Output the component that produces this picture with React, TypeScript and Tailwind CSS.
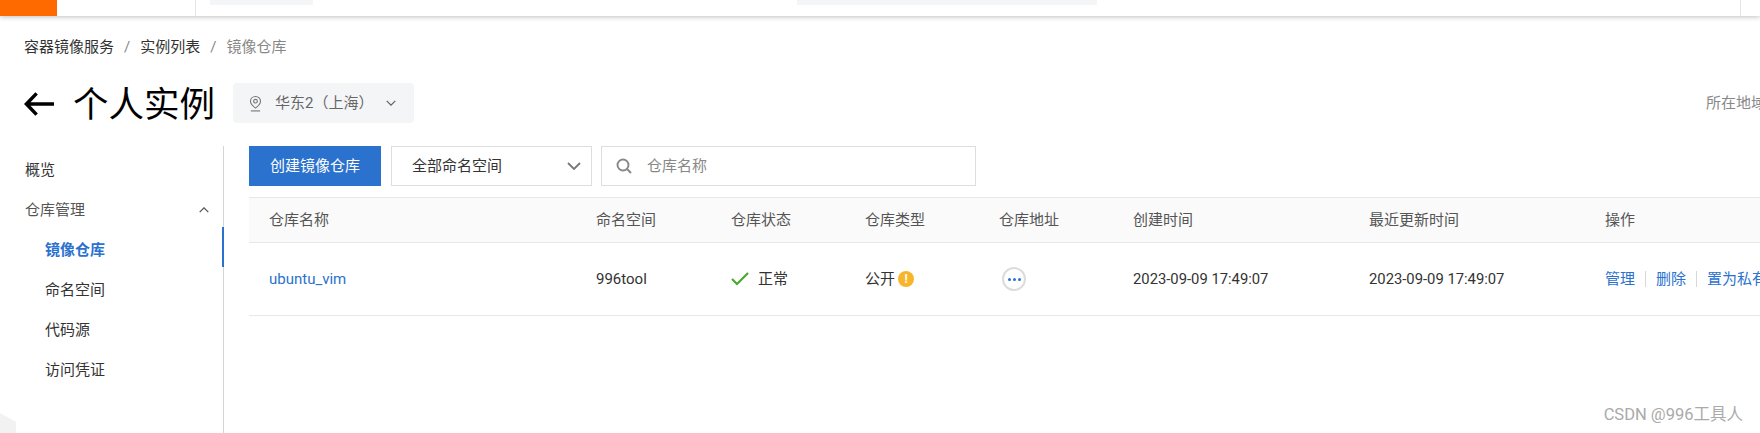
const font = { fontFamily: 'Roboto, "Noto Sans CJK SC", sans-serif' };

const columns = "grid grid-cols-[327px_135px_134px_134px_134px_236px_236px_1fr]";

function Chevron({ up = false, className = "" }: { up?: boolean; className?: string }) {
	return (
		<svg viewBox="0 0 14 8" fill="none" stroke="currentColor" strokeWidth="1.8" className={className}>
			<path d={up ? "M1 7l6-6 6 6" : "M1 1l6 6 6-6"} />
		</svg>
	);
}

function TopBar() {
	return (
		<div className="relative z-10 flex h-4 w-full bg-white shadow-[0_1px_5px_rgba(0,0,0,0.25)]">
			<div className="h-full w-[57px] bg-[#ff6a00]"></div>
			<div className="ml-[138px] h-full border-l border-[#e5e5e5] pl-[14px]">
				<div className="h-[5px] w-[103px] bg-[#f4f5f7]"></div>
			</div>
			<div className="ml-[484px] h-[5px] w-[300px] bg-[#f4f5f7]"></div>
			<div className="ml-auto mr-[19px] h-full border-l border-[#e5e5e5]"></div>
		</div>
	);
}

function PageHeader() {
	return (
		<>
			<div className="mt-4 flex h-[30px] items-center pl-6 text-[15px]">
				<span className="text-[#333]">容器镜像服务</span>
				<span className="mx-[10px] text-[#888]">/</span>
				<span className="text-[#333]">实例列表</span>
				<span className="mx-[10px] text-[#888]">/</span>
				<span className="text-[#888]">镜像仓库</span>
			</div>
			<div className="mt-[21px] flex h-10 items-center pl-6">
				<svg viewBox="0 0 32 26" fill="none" stroke="#000" strokeWidth="3.6" className="mt-[2px] h-[26px] w-[31px]">
					<path d="M31 13H3M13 2L2.5 13 13 24" />
				</svg>
				<h1 className="ml-[18px] mt-[3px] w-[144px] text-[35.5px] leading-10 text-black">个人实例</h1>
				<div className="ml-4 flex h-10 w-[181px] items-center rounded-sm bg-[#f4f5f7] pl-4 text-[15px] text-[#666]">
					<svg viewBox="0 0 14 18" fill="none" stroke="#777" strokeWidth="1.2" className="h-[17px] w-[13px]">
						<path d="M7 1.5C3.8 1.5 1.6 3.9 1.6 6.6 1.6 9.4 4.4 12 7 14c2.6-2 5.4-4.6 5.4-7.4C12.4 3.9 10.2 1.500 7 1.500z" />
						<circle cx="7" cy="6.500" r="2" />
						<path d="M2 17h10" />
					</svg>
					<span className="ml-[13px] whitespace-nowrap">华东2（上海）</span>
					<Chevron className="ml-auto mr-[18px] h-[6px] w-[10px] shrink-0 text-[#666]" />
				</div>
				<span className="ml-auto w-[54px] shrink-0 overflow-hidden whitespace-nowrap text-[15px] text-[#888]">所在地域</span>
			</div>
		</>
	);
}

function SideNav() {
	return (
		<div className="h-full w-[224px] shrink-0 border-r border-[#d5d5d5] pt-1 text-[15px]">
			<div className="flex h-[40px] items-center pl-[25px] text-[#333]">概览</div>
			<div className="flex h-[40px] items-center justify-between pl-[25px] pr-[14px] text-[#555]">
				<span>仓库管理</span>
				<Chevron up className="h-[6px] w-[10px] text-[#555]" />
			</div>
			<div className="relative flex h-[40px] items-center pl-[45px] font-semibold text-[#2a72ce]">
				镜像仓库
				<span className="absolute -right-px -top-[3px] h-10 w-[2px] bg-[#2a72ce]"></span>
			</div>
			<div className="flex h-[40px] items-center pl-[45px] text-[#333]">命名空间</div>
			<div className="flex h-[40px] items-center pl-[45px] text-[#333]">代码源</div>
			<div className="flex h-[40px] items-center pl-[45px] text-[#333]">访问凭证</div>
		</div>
	);
}

function Toolbar() {
	return (
		<div className="flex h-10 items-stretch text-[15px]">
			<button className="w-[132px] bg-[#2a72ce] text-white">创建镜像仓库</button>
			<div className="ml-[10px] flex w-[201px] items-center justify-between border border-[#dedede] pl-5 pr-[10px] text-[#333]">
				<span>全部命名空间</span>
				<Chevron className="h-2 w-[14px] text-[#777]" />
			</div>
			<div className="ml-[9px] flex w-[375px] items-center border border-[#dedede] pl-[14px] text-[#888]">
				<svg viewBox="0 0 16 16" fill="none" stroke="#888" strokeWidth="1.9" className="h-4 w-4">
					<circle cx="7" cy="7" r="5.500" />
					<path d="M11 11l4 4" />
				</svg>
				<span className="ml-[15px]">仓库名称</span>
			</div>
		</div>
	);
}

function RepoTable() {
	const heads = ["仓库名称", "命名空间", "仓库状态", "仓库类型", "仓库地址", "创建时间", "最近更新时间", "操作"];
	return (
		<div className="mt-[11px] text-[15px]">
			<div className={`${columns} h-[46px] items-center border-y border-[#e8e8e8] bg-[#fafafa] pl-5 text-[#555]`}>
				{heads.map((h) => (
					<div key={h}>{h}</div>
				))}
			</div>
			<div className={`${columns} h-[73px] items-center border-b border-[#e8e8e8] pl-5 text-[#333]`}>
				<div className="text-[#2a72ce]">ubuntu_vim</div>
				<div>996tool</div>
				<div className="flex items-center">
					<svg viewBox="0 0 18 14" fill="none" stroke="#4aa82c" strokeWidth="2.2" className="h-[14px] w-[18px]">
						<path d="M1 7l5 5L17 1" />
					</svg>
					<span className="ml-[9px]">正常</span>
				</div>
				<div className="flex items-center">
					<span>公开</span>
					<span className="ml-[3px] flex h-4 w-4 items-center justify-center rounded-full bg-[#f7b52c] text-[12px] font-bold leading-none text-white">!</span>
				</div>
				<div>
					<span className="ml-[3px] flex h-6 w-6 items-center justify-center gap-[2px] rounded-full border-2 border-[#dcdcdc]">
						<i className="h-[3px] w-[3px] rounded-full bg-[#2a72ce]"></i>
						<i className="h-[3px] w-[3px] rounded-full bg-[#2a72ce]"></i>
						<i className="h-[3px] w-[3px] rounded-full bg-[#2a72ce]"></i>
					</span>
				</div>
				<div className="text-[14.8px]">2023-09-09 17:49:07</div>
				<div className="text-[14.8px]">2023-09-09 17:49:07</div>
				<div className="flex items-center whitespace-nowrap text-[#2a72ce]">
					<span>管理</span>
					<span className="ml-[10px] mr-[10px] h-4 w-px bg-[#d8d8d8]"></span>
					<span>删除</span>
					<span className="ml-[10px] mr-[10px] h-4 w-px bg-[#d8d8d8]"></span>
					<span>置为私有</span>
				</div>
			</div>
		</div>
	);
}

export default function App() {
	return (
		<div style={font} className="relative h-[433px] w-[1760px] overflow-hidden bg-white">
			<TopBar />
			<PageHeader />
			<div className="mt-[23px] flex h-[287px]">
				<SideNav />
				<div className="ml-[25px] min-w-0 flex-1">
					<Toolbar />
					<RepoTable />
				</div>
			</div>
			<svg viewBox="0 0 16 20" className="absolute bottom-0 left-0 h-5 w-4">
				<path d="M0 0l16 9v11H0z" fill="#f2f2f2" />
			</svg>
			<div className="absolute bottom-[5px] right-[17px] text-[16.5px] text-[#aaa]">CSDN @996工具人</div>
		</div>
	);
}
